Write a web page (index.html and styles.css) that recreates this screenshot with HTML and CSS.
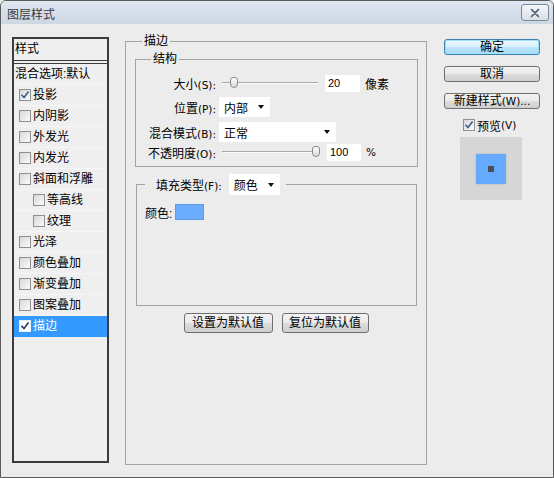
FILE: index.html
```html
<!DOCTYPE html>
<html lang="zh-CN">
<head>
<meta charset="utf-8">
<title>图层样式</title>
<link rel="stylesheet" href="styles.css">
</head>
<body>
<div class="window">
  <div class="titlebar">
    <span class="title">图层样式</span>
    <div class="close">
      <svg width="12" height="10" viewBox="0 0 12 10"><path d="M2.5 1.5 L9.5 8.5 M9.5 1.5 L2.5 8.5" fill="none" stroke="#ffffff" stroke-width="3.4" stroke-linecap="round"/><path d="M2.5 1.5 L9.5 8.5 M9.5 1.5 L2.5 8.5" fill="none" stroke="#5f6c7d" stroke-width="1.9" stroke-linecap="round"/></svg>
    </div>
  </div>
  <div class="client">
    <div class="styles">
      <div class="styles-head">样式</div>
      <div class="srow">混合选项:默认</div>
      <div class="srow chk"><span class="cb"><svg width="10" height="10" viewBox="0 0 10 10"><path d="M1.5 4.8 L4 7.5 L8.6 1.6" fill="none" stroke="#3f5d8c" stroke-width="1.6"/></svg></span>投影</div>
      <div class="srow chk"><span class="cb"></span>内阴影</div>
      <div class="srow chk"><span class="cb"></span>外发光</div>
      <div class="srow chk"><span class="cb"></span>内发光</div>
      <div class="srow chk"><span class="cb"></span>斜面和浮雕</div>
      <div class="srow sub"><span class="cb"></span>等高线</div>
      <div class="srow sub"><span class="cb"></span>纹理</div>
      <div class="srow chk"><span class="cb"></span>光泽</div>
      <div class="srow chk"><span class="cb"></span>颜色叠加</div>
      <div class="srow chk"><span class="cb"></span>渐变叠加</div>
      <div class="srow chk"><span class="cb"></span>图案叠加</div>
      <div class="srow chk active"><span class="cb"><svg width="10" height="10" viewBox="0 0 10 10"><path d="M1.5 4.8 L4 7.5 L8.6 1.6" fill="none" stroke="#2b3f66" stroke-width="1.7"/></svg></span>描边</div>
    </div>

    <fieldset class="grp main">
      <legend class="lg-main">描边</legend>
      <fieldset class="grp struct">
        <legend class="lg-struct">结构</legend>
        <div class="frow r1">
          <span class="lbl">大小<span class="lt">(S):</span></span>
          <div class="slider"><span class="thumb" style="left:8px"></span></div>
          <div class="num">20</div>
          <span class="unit">像素</span>
        </div>
        <div class="frow r2">
          <span class="lbl">位置<span class="lt">(P):</span></span>
          <div class="sel w51"><span>内部</span><span class="arrow"></span></div>
        </div>
        <div class="frow r3">
          <span class="lbl">混合模式<span class="lt">(B):</span></span>
          <div class="sel w117"><span>正常</span><span class="arrow"></span></div>
        </div>
        <div class="frow r4">
          <span class="lbl">不透明度<span class="lt">(O):</span></span>
          <div class="slider"><span class="thumb" style="left:90px"></span></div>
          <div class="num op">100</div>
          <span class="unit lt">%</span>
        </div>
      </fieldset>

      <fieldset class="grp fill">
        <legend class="lg-fill">
          <div class="legend-in">
            <span>填充类型<span class="lt">(F):</span></span>
            <div class="sel w51"><span>颜色</span><span class="arrow"></span></div>
          </div>
        </legend>
        <div class="color-row">
          <span>颜色:</span>
          <span class="swatch"></span>
        </div>
      </fieldset>

      <div class="defaults">
        <button class="btn b89">设置为默认值</button>
        <button class="btn b87">复位为默认值</button>
      </div>
    </fieldset>

    <div class="side">
      <button class="btn side-btn default">确定</button>
      <button class="btn side-btn">取消</button>
      <button class="btn side-btn">新建样式<span class="lt">(W)...</span></button>
      <div class="pv"><span class="cb"><svg width="10" height="10" viewBox="0 0 10 10"><path d="M1.5 4.8 L4 7.5 L8.6 1.6" fill="none" stroke="#3f5d8c" stroke-width="1.6"/></svg></span>预览<span class="lt">(V)</span></div>
      <div class="pbox"><div class="psq"><div class="pdot"></div></div></div>
    </div>
  </div>
</div>
</body>
</html>
```
FILE: styles.css
```css
body {
  margin: 0;
  background: #ececec;
  font-family: "Liberation Sans", "Noto Sans CJK SC", sans-serif;
  font-size: 12px;
  color: #000;
}

.lt {
  font-family: "DejaVu Sans", "Liberation Sans", sans-serif;
  font-size: 10.5px;
}

.window {
  width: 554px;
  height: 478px;
  box-sizing: border-box;
  border: 1px solid #5a5a5a;
  border-radius: 6px 6px 0 0;
  background: #ececec;
  overflow: hidden;
  display: flex;
  flex-direction: column;
}

.titlebar {
  height: 23px;
  flex: none;
  display: flex;
  justify-content: space-between;
  align-items: flex-start;
  background: linear-gradient(#dfe7f0, #ccd7e3);
}

.title {
  padding: 7px 0 0 6px;
  line-height: 14px;
  color: #3a3a3a;
}

.close {
  margin: 3px 4px 0 0;
  width: 28px;
  height: 17px;
  box-sizing: border-box;
  border: 1px solid #7d8898;
  border-radius: 3px;
  background: linear-gradient(#f5f7fa, #d7dee7);
  display: flex;
  align-items: center;
  justify-content: center;
}

.client {
  flex: 1;
  display: flex;
  align-items: flex-start;
  padding-left: 11px;
}

/* ---------- left style list ---------- */
.styles {
  flex: none;
  width: 97px;
  height: 426px;
  margin-top: 13px;
  box-sizing: border-box;
  border: 2px solid #3c3c3c;
  background: #efefef;
}

.styles-head {
  height: 21px;
  line-height: 21px;
  padding-left: 1px;
  border-bottom: 4px double #3c3c3c;
}

.srow {
  height: 20px;
  line-height: 20px;
  border-bottom: 1px solid #f6f6f6;
  display: flex;
  align-items: center;
  padding-left: 1px;
  white-space: nowrap;
}

.srow.chk { padding-left: 5px; }
.srow.sub { padding-left: 19px; }

.srow.active {
  background: #3399ff;
  color: #fff;
  border-bottom-color: #3399ff;
}

.cb {
  flex: none;
  width: 12px;
  height: 12px;
  box-sizing: border-box;
  border: 1px solid #8e8f8f;
  background: linear-gradient(135deg, #d8d8d8, #fbfbfb);
  margin-right: 2px;
  display: flex;
  align-items: center;
  justify-content: center;
}

.srow.active .cb {
  background: #fff;
  border-color: #e8f2ff;
}

/* ---------- group boxes ---------- */
.grp {
  margin: 0;
  padding: 0;
  min-width: 0;
  border: 1px solid #a3a3a3;
}

.grp > legend {
  padding: 0 2px;
  line-height: 14px;
}

.main {
  flex: none;
  width: 302px;
  height: 431px;
  box-sizing: border-box;
  margin: 10px 0 0 16px;
}

.lg-main { margin-left: 16px; }

.struct {
  width: 283px;
  box-sizing: border-box;
  margin: 4px 0 0 9px;
  padding-bottom: 4px;
}

.lg-struct { margin-left: 15px; }

.frow {
  display: flex;
  align-items: center;
  height: 20px;
}

.r1 { margin-top: 7px; }
.r2 { margin-top: 4px; }
.r3 { margin-top: 5px; }
.r4 { margin-top: 0; }

.lbl {
  flex: none;
  width: 80px;
  text-align: right;
  white-space: nowrap;
}

.slider {
  position: relative;
  flex: none;
  width: 96px;
  height: 12px;
  margin-left: 6px;
}

.slider::before {
  content: "";
  position: absolute;
  left: 0;
  right: 0;
  top: 5px;
  height: 1px;
  background: #a9a9a9;
  border-bottom: 1px solid #fafafa;
}

.thumb {
  position: absolute;
  top: 0;
  width: 8px;
  height: 11px;
  box-sizing: border-box;
  border: 1px solid #8a8a8a;
  border-radius: 3px 3px 4px 4px;
  background: linear-gradient(#fdfdfd, #d9d9d9);
}

.num {
  flex: none;
  width: 35px;
  height: 17px;
  box-sizing: border-box;
  margin-left: 7px;
  padding-left: 3px;
  background: #fff;
  line-height: 17px;
  font-size: 11px;
}

.num.op {
  width: 34px;
  margin-left: 9px;
}

.unit { margin-left: 5px; }

.sel {
  flex: none;
  height: 20px;
  box-sizing: border-box;
  margin-left: 3px;
  padding: 0 6px 0 5px;
  background: #fff;
  display: flex;
  align-items: center;
  justify-content: space-between;
}

.sel.w51 { width: 51px; }
.sel.w117 { width: 117px; }

.arrow {
  width: 0;
  height: 0;
  border-left: 3.5px solid transparent;
  border-right: 3.5px solid transparent;
  border-top: 4px solid #111;
}

.fill {
  width: 281px;
  height: 132px;
  box-sizing: border-box;
  margin: 7px 0 0 10px;
}

.grp > .lg-fill {
  margin-left: 8px;
  padding: 0 6px 0 11px;
  line-height: normal;
}

.legend-in {
  display: flex;
  align-items: center;
  height: 21px;
}

.legend-in .sel {
  height: 21px;
  margin-left: 7px;
}

.color-row {
  display: flex;
  align-items: center;
  height: 16px;
  margin: 9px 0 0 8px;
}

.swatch {
  width: 29px;
  height: 16px;
  box-sizing: border-box;
  margin-left: 3px;
  background: #6aabfb;
  border: 1px solid #5c9de9;
}

.defaults {
  display: flex;
  justify-content: center;
  gap: 9px;
  margin-top: 7px;
}

/* ---------- buttons ---------- */
.btn {
  height: 20px;
  box-sizing: border-box;
  border: 1px solid #707070;
  border-radius: 3px;
  background: linear-gradient(#f2f2f2 0%, #ebebeb 50%, #dddddd 51%, #cfcfcf 100%);
  font: inherit;
  color: #000;
  padding: 0;
  line-height: 1;
  display: flex;
  align-items: center;
  justify-content: center;
  white-space: nowrap;
}

.b89 { width: 89px; }
.b87 { width: 87px; }

.side {
  flex: none;
  width: 96px;
  margin: 15px 0 0 17px;
  display: flex;
  flex-direction: column;
}

.side-btn {
  width: 96px;
  height: 16px;
  margin-bottom: 11px;
}

.side-btn:nth-child(3) { margin-bottom: 10px; }

.btn.default {
  border-color: #3c7fb1;
  background: linear-gradient(#eaf6fd 0%, #d9f0fc 50%, #bee6fd 51%, #a7d9f5 100%);
  box-shadow: inset 0 0 0 1px #9fe3fb;
}

.pv {
  display: flex;
  align-items: center;
  height: 12px;
  padding-left: 19px;
  white-space: nowrap;
}

.pbox {
  width: 62px;
  height: 63px;
  margin: 6px 0 0 16px;
  background: #d6d6d6;
  display: flex;
  align-items: center;
  justify-content: center;
}

.psq {
  width: 30px;
  height: 30px;
  background: #66aaff;
  box-shadow: 0 0 2px rgba(0, 0, 0, 0.15);
  display: flex;
  align-items: center;
  justify-content: center;
}

.pdot {
  width: 6px;
  height: 6px;
  background: #4d4d57;
}
```
